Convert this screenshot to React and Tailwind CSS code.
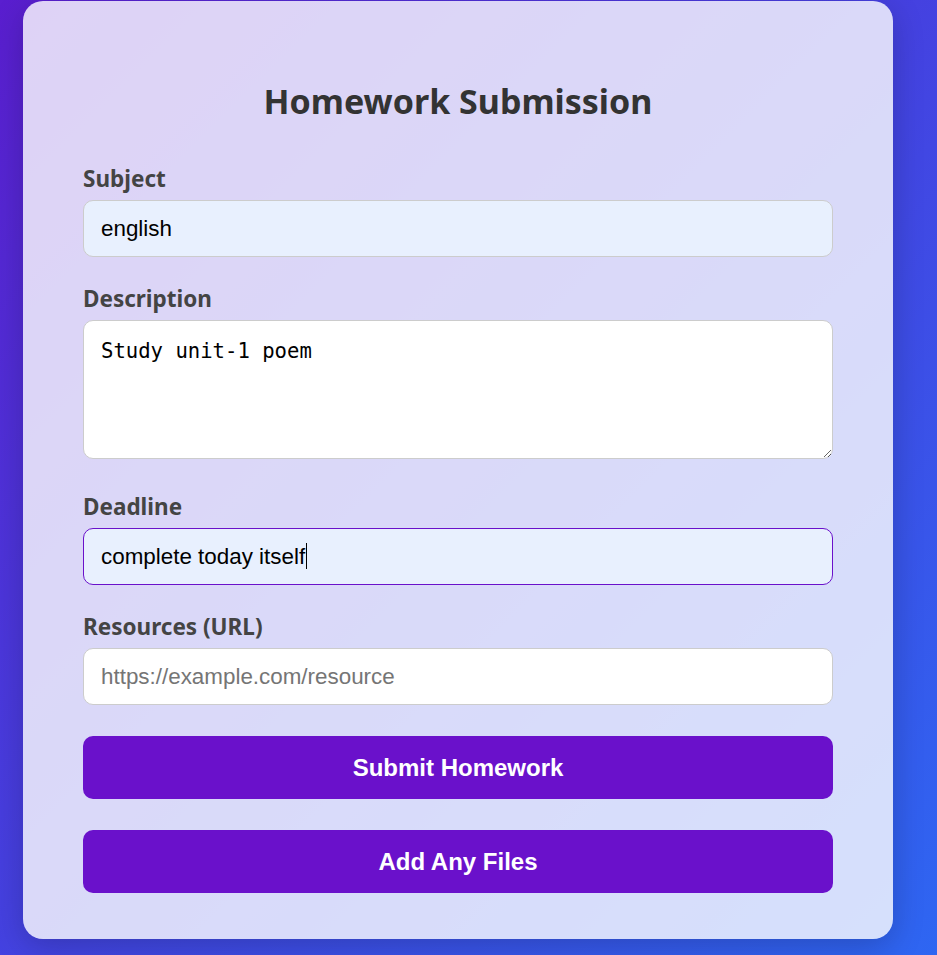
const labelCls =
  "mb-[9px] block font-['Noto_Sans',sans-serif] text-[22.5px] font-bold leading-[24px] text-[#444]";
const inputCls =
  "h-[57px] w-full rounded-[10px] border px-[17px] font-['Liberation_Sans',Arial,sans-serif] text-[22.4px] text-black outline-none";
const buttonCls =
  "h-[63px] w-full rounded-[10px] bg-[#6a11cb] font-['Liberation_Sans',Arial,sans-serif] text-[24px] font-bold text-white";

export default function App() {
  return (
    <div className="min-h-screen w-full bg-[linear-gradient(135deg,#5a1ecf,#2e66f2)] pl-[23px] pt-[1px] pb-[16px]">
      <div className="w-[870px] rounded-[20px] bg-white/80 px-[60px] pt-[78px] pb-[46px] shadow-[0_8px_32px_rgba(0,0,0,0.2)]">
        <h2 className="mb-[44px] text-center font-['Noto_Sans',sans-serif] text-[34px] font-bold leading-[44px] text-[#333]">
          Homework Submission
        </h2>
        <form className="flex flex-col" onSubmit={(e) => e.preventDefault()}>
          <label className={labelCls}>Subject</label>
          <input
            className={`${inputCls} mb-[30px] border-[#ccc] bg-[#e8f0fe]`}
            defaultValue="english"
          />

          <label className={labelCls}>Description</label>
          <textarea
            className="mb-[36px] block h-[139px] w-full rounded-[10px] border border-[#ccc] bg-white px-[17px] pt-[18px] font-['DejaVu_Sans_Mono',monospace] text-[20.6px] leading-[24px] text-black outline-none"
            defaultValue="Study unit-1 poem"
          />

          <label className={labelCls}>Deadline</label>
          <div className="relative mb-[30px]">
            <input
              className={`${inputCls} border-[#6a11cb] bg-[#e8f0fe]`}
              defaultValue="complete today itself"
            />
            {/* text caret */}
            <span className="pointer-events-none absolute left-[223px] top-[15px] h-[26px] w-px bg-black" />
          </div>

          <label className={labelCls}>Resources (URL)</label>
          <input
            className={`${inputCls} mb-[31px] border-[#ccc] bg-white placeholder:text-[#757575]`}
            placeholder="https://example.com/resource"
          />

          <button type="submit" className={`${buttonCls} mb-[31px]`}>
            Submit Homework
          </button>
          <button type="button" className={buttonCls}>
            Add Any Files
          </button>
        </form>
      </div>
    </div>
  );
}
